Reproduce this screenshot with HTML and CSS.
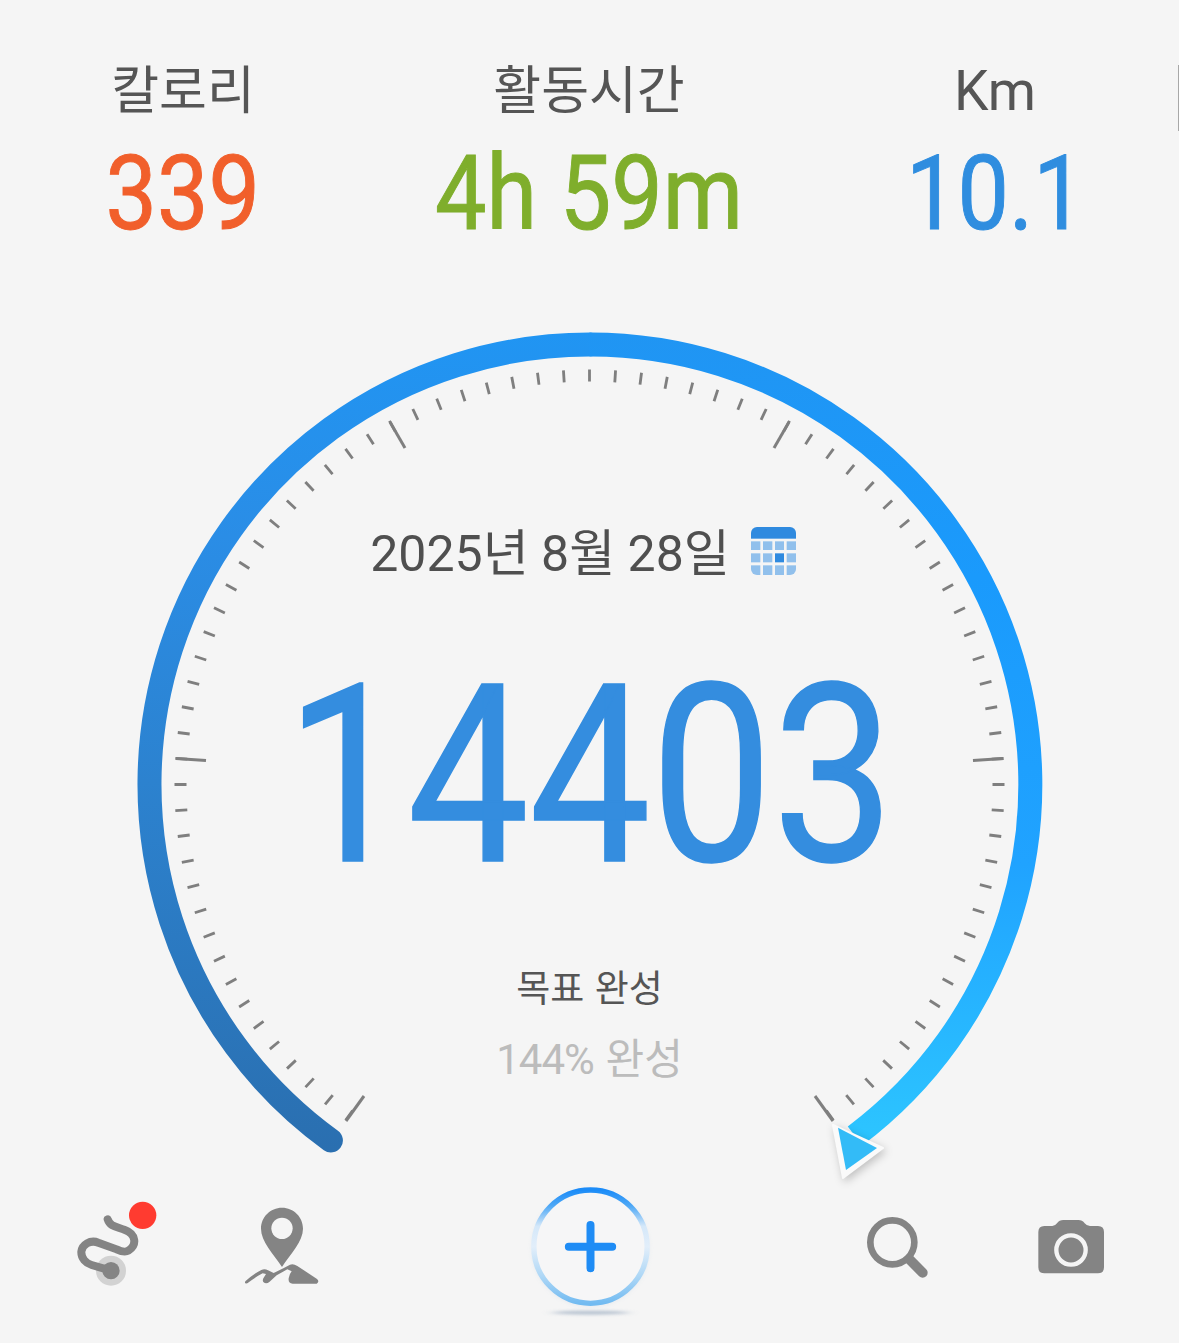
FILE: index.html
```html
<!DOCTYPE html>
<html lang="ko">
<head>
<meta charset="utf-8">
<title>걸음 수</title>
<link rel="stylesheet" href="styles.css">
</head>
<body>
<main class="screen">
  <div class="edge-mark"></div>
  <section class="stats">
    <div class="stat">
      <div class="stat-label">칼로리</div>
      <div class="stat-value value-cal"><span>339</span></div>
    </div>
    <div class="stat">
      <div class="stat-label">활동시간</div>
      <div class="stat-value value-time"><span>4h 59m</span></div>
    </div>
    <div class="stat">
      <div class="stat-label stat-label-latin">Km</div>
      <div class="stat-value value-km"><span>10.1</span></div>
    </div>
  </section>

  <section class="gauge">
    <svg class="gauge-svg" viewBox="0 320 1179 858" width="1179" height="858" aria-hidden="true">
      <defs>
        <linearGradient id="arcLeft" gradientUnits="userSpaceOnUse" x1="0" y1="332" x2="0" y2="1150">
          <stop offset="0" stop-color="#2095f3"/>
          <stop offset="0.25" stop-color="#2a8de6"/>
          <stop offset="0.55" stop-color="#2c82cf"/>
          <stop offset="1" stop-color="#2a6fb0"/>
        </linearGradient>
        <linearGradient id="arcRight" gradientUnits="userSpaceOnUse" x1="0" y1="332" x2="0" y2="1150">
          <stop offset="0" stop-color="#2095f3"/>
          <stop offset="0.3" stop-color="#1a9afc"/>
          <stop offset="0.65" stop-color="#20a3ff"/>
          <stop offset="1" stop-color="#2dc6ff"/>
        </linearGradient>
      </defs>
      <path class="ticks" pathLength="80" d="M349.1 1115.4A409 409 0 1 1 829.9 1115.4"/>
      <g class="major-ticks">
        <line x1="346" y1="1121" x2="364" y2="1096"/>
        <line x1="176" y1="758.5" x2="206" y2="760.5"/>
        <line x1="390" y1="422" x2="405" y2="448"/>
        <line x1="789" y1="422" x2="774" y2="448"/>
        <line x1="1003" y1="758.5" x2="973" y2="760.5"/>
        <line x1="833" y1="1121" x2="815" y2="1096"/>
      </g>
      <path class="arc arc-left" d="M330.9 1140.5A440 440 0 0 1 589.5 344.5"/>
      <path class="arc arc-right" d="M589.5 344.5A440 440 0 0 1 855 1136"/>
      <polygon class="pointer-edge" points="833,1125 883,1148 843,1178"/>
      <polygon class="pointer-fill" points="838,1127.7 877,1148 846,1170"/>
    </svg>
    <div class="gauge-body">
      <div class="date-row">
        <span class="date-text">2025년 8월 28일</span>
        <svg class="calendar" viewBox="45 37 135 144" width="45" height="48" aria-hidden="true">
          <defs><clipPath id="calClip"><rect x="45" y="37" width="135" height="144" rx="18"/></clipPath></defs>
          <g clip-path="url(#calClip)">
            <rect class="cal-dark" x="45" y="37" width="135" height="35"/>
            <rect class="cal-cell" x="45" y="80" width="28" height="26"/>
            <rect class="cal-cell" x="81" y="80" width="28" height="26"/>
            <rect class="cal-cell" x="117" y="80" width="27" height="26"/>
            <rect class="cal-cell" x="152" y="80" width="28" height="26"/>
            <rect class="cal-cell" x="45" y="116" width="28" height="27"/>
            <rect class="cal-cell" x="81" y="116" width="28" height="27"/>
            <rect class="cal-dark" x="117" y="116" width="27" height="27"/>
            <rect class="cal-cell" x="152" y="116" width="28" height="27"/>
            <rect class="cal-cell" x="45" y="152" width="28" height="29"/>
            <rect class="cal-cell" x="81" y="152" width="28" height="29"/>
            <rect class="cal-cell" x="117" y="152" width="27" height="29"/>
            <rect class="cal-cell" x="152" y="152" width="28" height="29"/>
          </g>
        </svg>
      </div>
      <div class="steps"><span>14403</span></div>
      <div class="goal">목표 완성</div>
      <div class="percent"><span class="percent-num">144%</span> 완성</div>
    </div>
  </section>

  <nav class="toolbar">
    <div class="tool-group tool-group-left">
      <svg class="tool" viewBox="0 84 300 300" width="100" height="100" aria-hidden="true">
        <circle class="route-halo" cx="153" cy="302" r="45"/>
        <path class="route-line" d="M143 148C150 170 170 170 195 180C228 192 232 225 205 242C195 248 185 245 170 238L115 218C90 208 66 225 64 245C63 265 78 280 95 285L153 302"/>
        <circle class="icon-fill" cx="153" cy="302" r="26"/>
        <circle class="red-dot" cx="248" cy="136" r="41"/>
      </svg>
      <svg class="tool" viewBox="516 84 300 300" width="100" height="100" aria-hidden="true">
        <path class="icon-fill" d="M666 113C631 113 603 141 603 176C603 215 640 250 666 291C692 250 729 215 729 176C729 141 701 113 666 113Z"/>
        <circle class="icon-hole" cx="666" cy="175" r="32"/>
        <path class="icon-fill" d="M556 334Q580 312 604 300Q614 295 624 301L641 309Q668 296 690 284Q700 280 712 288L770 326Q780 334 770 341L698 341Q684 341 686 325Q688 312 695 304L682 298L650 316L628 336Q618 344 610 336Q606 330 612 322L618 312L608 310Q585 322 562 340Q552 342 556 334Z"/>
      </svg>
    </div>
    <button class="add-button" type="button" aria-label="추가">
      <svg viewBox="73.5 24 390 420" width="130" height="140" aria-hidden="true">
        <defs>
          <linearGradient id="ringGrad" x1="0" y1="0" x2="0" y2="1">
            <stop offset="0" stop-color="#1c8cf8"/>
            <stop offset="0.14" stop-color="#4ea8f6"/>
            <stop offset="0.32" stop-color="#d5e8f9"/>
            <stop offset="0.5" stop-color="#e2eefa"/>
            <stop offset="0.75" stop-color="#b0d8f6"/>
            <stop offset="1" stop-color="#72bbf1"/>
          </linearGradient>
          <filter id="blurWide" x="-30%" y="-300%" width="160%" height="700%"><feGaussianBlur stdDeviation="18 5"/></filter>
          <filter id="blurRing" x="-20%" y="-20%" width="140%" height="140%"><feGaussianBlur stdDeviation="8"/></filter>
          <filter id="softRing" x="-10%" y="-10%" width="120%" height="120%"><feGaussianBlur stdDeviation="2"/></filter>
        </defs>
        <ellipse class="add-shadow" cx="270" cy="428" rx="115" ry="6" filter="url(#blurWide)"/>
        <circle class="add-glow" cx="270" cy="234" r="174" filter="url(#blurRing)"/>
        <circle class="add-face" cx="270" cy="230" r="168"/>
        <circle class="add-ring" cx="270" cy="230" r="170" filter="url(#softRing)"/>
        <path class="add-plus" d="M205 230H335M270 165V295"/>
      </svg>
    </button>
    <div class="tool-group tool-group-right">
      <svg class="tool" viewBox="-9 24 300 300" width="100" height="100" aria-hidden="true">
        <circle class="search-ring" cx="127" cy="157" r="66"/>
        <path class="search-handle" d="M178 208L218 248"/>
      </svg>
      <svg class="tool" viewBox="513 24 300 300" width="100" height="100" aria-hidden="true">
        <path class="icon-fill" d="M583 108H607Q615 108 621 100Q628 90 640 90H685Q697 90 704 100Q710 108 720 108H744Q762 108 762 126V232Q762 250 744 250H583Q565 250 565 232V126Q565 108 583 108Z"/>
        <circle class="camera-ring" cx="663" cy="180" r="44"/>
      </svg>
    </div>
  </nav>
</main>
</body>
</html>
```
FILE: styles.css
```css
* { box-sizing: border-box; }

html, body {
  margin: 0;
  padding: 0;
  background: #f5f5f5;
}

.screen {
  position: relative;
  width: 1179px;
  height: 1343px;
  overflow: hidden;
  display: flex;
  flex-direction: column;
  background: #f5f5f5;
  font-family: Roboto, "Noto Sans CJK KR", sans-serif;
}

.edge-mark {
  position: absolute;
  top: 65px;
  right: 0;
  width: 1px;
  height: 66px;
  background: #a8a8a8;
}

/* top stats */
.stats {
  display: flex;
  gap: 106px;
  height: 320px;
  padding: 59px 0 0 33px;
}

.stat {
  width: 300px;
  text-align: center;
}

.stat-label {
  height: 56px;
  font-family: "Noto Sans CJK KR", Roboto, sans-serif;
  font-size: 52px;
  line-height: 56px;
  color: #555;
}

.stat-label-latin {
  font-family: Roboto, sans-serif;
  font-size: 55px;
  line-height: 64px;
}

.stat-value {
  display: flex;
  justify-content: center;
  height: 104px;
  margin-top: 27px;
  font-size: 103px;
  line-height: 104px;
  white-space: nowrap;
  -webkit-text-stroke: 1px currentColor;
}

.stat-value span {
  display: block;
  transform: scaleX(0.89);
}

.value-cal { color: #f15f2b; }
.value-time { color: #7fae2c; }
.value-km { color: #2f8ddf; }

/* gauge */
.gauge {
  position: relative;
  height: 858px;
}

.gauge-svg {
  position: absolute;
  top: 0;
  left: 0;
  overflow: visible;
}

.ticks {
  fill: none;
  stroke: #7f7f7f;
  stroke-width: 12;
  stroke-dasharray: 0.11 0.89;
  stroke-dashoffset: 0.055;
}

.major-ticks line {
  stroke: #7f7f7f;
  stroke-width: 3;
}

.arc {
  fill: none;
  stroke-width: 24;
}

.arc-left {
  stroke: url(#arcLeft);
  stroke-linecap: round;
}

.arc-right { stroke: url(#arcRight); }

.pointer-edge {
  fill: #fafafa;
  stroke: #fafafa;
  stroke-width: 2;
  stroke-linejoin: round;
  filter: drop-shadow(2px 3px 4px rgba(0, 0, 0, 0.22));
}

.pointer-fill { fill: #33bbf7; }

.gauge-body {
  position: relative;
  display: flex;
  flex-direction: column;
  align-items: center;
  padding-top: 204px;
}

.date-row {
  display: flex;
  align-items: center;
  gap: 23px;
  height: 60px;
  padding-right: 13px;
}

.date-text {
  font-size: 50px;
  line-height: 60px;
  color: #4f4f4f;
  white-space: nowrap;
}

.calendar {
  display: block;
  margin: -6px 0 0 -2px;
}

.cal-dark { fill: #2f8adf; }
.cal-cell { fill: #91c0ec; }

.steps {
  height: 260px;
  margin-top: 62px;
  font-size: 249px;
  line-height: 260px;
  color: #348ddf;
  white-space: nowrap;
  -webkit-text-stroke: 1.5px currentColor;
}

.steps span {
  display: inline-block;
  transform: scaleX(0.87);
}

.goal {
  margin-top: 57px;
  height: 46px;
  font-family: "Noto Sans CJK KR", sans-serif;
  font-size: 37px;
  line-height: 46px;
  color: #555;
}

.percent {
  margin-top: 21px;
  height: 52px;
  font-family: "Noto Sans CJK KR", sans-serif;
  font-size: 42px;
  line-height: 52px;
  color: #bcbcbc;
  white-space: nowrap;
}

.percent-num {
  font-family: Roboto, sans-serif;
  letter-spacing: -1px;
}

/* bottom toolbar */
.toolbar {
  display: flex;
  align-items: center;
  justify-content: space-between;
  height: 140px;
  padding: 0 58px 0 60px;
}

.tool-group { display: flex; }
.tool-group-left { gap: 72px; }
.tool-group-right { gap: 74px; }

.tool { display: block; }

.icon-fill { fill: #848484; }
.icon-hole { fill: #f5f5f5; }

.route-line {
  fill: none;
  stroke: #848484;
  stroke-width: 24;
  stroke-linecap: round;
}

.route-halo { fill: #d2d2d2; }
.red-dot { fill: #ff3b30; }

.search-ring {
  fill: none;
  stroke: #848484;
  stroke-width: 20;
}

.search-handle {
  stroke: #848484;
  stroke-width: 30;
  stroke-linecap: round;
}

.camera-ring {
  fill: #848484;
  stroke: #f5f5f5;
  stroke-width: 13;
}

.add-button {
  display: block;
  width: 130px;
  height: 140px;
  padding: 0;
  border: 0;
  background: none;
}

.add-button svg { display: block; }

.add-shadow { fill: #a9b7c8; opacity: 0.8; }
.add-glow { fill: #c8d6e4; opacity: 0.45; }
.add-face { fill: #f6f6f7; }

.add-ring {
  fill: none;
  stroke: url(#ringGrad);
  stroke-width: 16;
}

.add-plus {
  fill: none;
  stroke: #1f8cf5;
  stroke-width: 24;
  stroke-linecap: round;
}
```
